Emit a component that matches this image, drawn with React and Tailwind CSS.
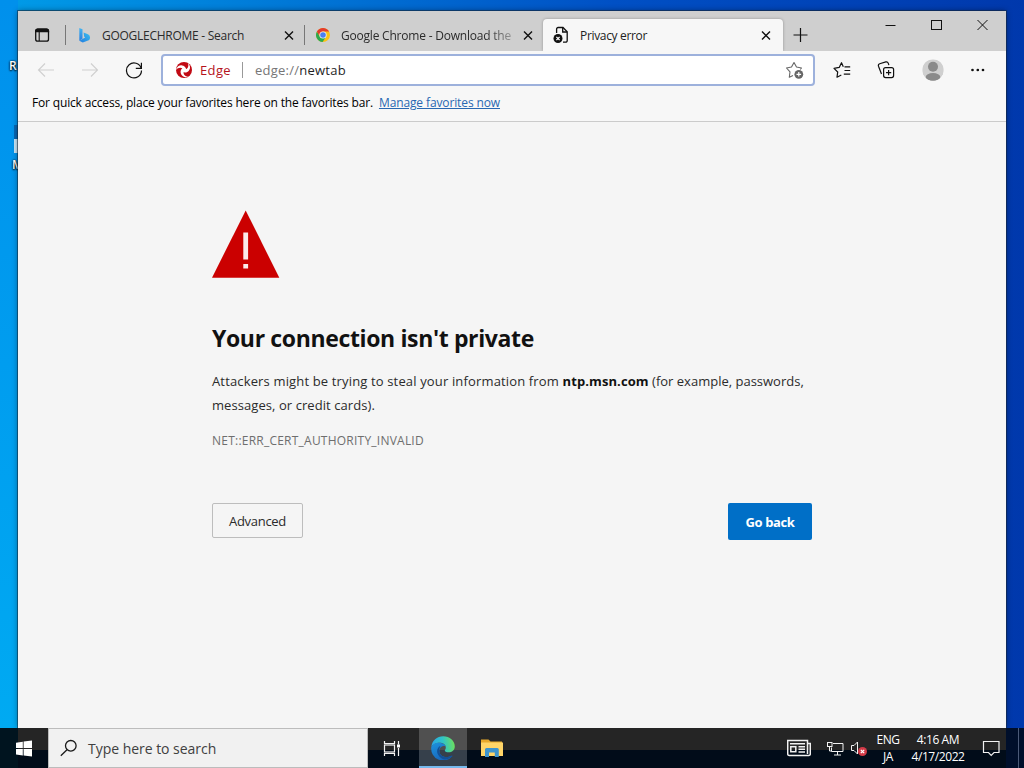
function TabActionsIcon() {
  return (
    <svg width="16" height="16" viewBox="0 0 16 16" fill="none" stroke="#111" strokeWidth="1.3">
      <rect x="1.7" y="2.2" width="12.8" height="12" rx="2" />
      <path d="M1.7 4a1.8 1.8 0 0 1 1.8-1.8h9.2A1.8 1.8 0 0 1 14.5 4v.7H1.7Z" fill="#111" />
      <path d="M5.2 5v9" strokeWidth="1.1" />
    </svg>
  )
}

function BingIcon() {
  return (
    <svg width="14" height="16" viewBox="0 0 14 16">
      <defs>
        <linearGradient id="bingStem" x1="0" y1="0" x2="0" y2="1">
          <stop offset="0" stopColor="#45b5f0" />
          <stop offset="1" stopColor="#2a7fe0" />
        </linearGradient>
        <linearGradient id="bingBowl" x1="0" y1="1" x2="1" y2="0">
          <stop offset="0" stopColor="#1f7be0" />
          <stop offset="1" stopColor="#3fc0ee" />
        </linearGradient>
      </defs>
      <path d="M1.3 1l3.2 1.2v9.6l-3.2 1.9Z" fill="url(#bingStem)" />
      <path d="M5.6 5.4l4.3 1.9a3.6 3.6 0 0 1 .9 6L4.8 15.4 1.3 13.7l5.9-3.2-1.1-1Z" fill="url(#bingBowl)" />
    </svg>
  )
}

function ChromeIcon() {
  return (
    <svg width="16" height="16" viewBox="0 0 16 16" className="mr-[2px] shrink-0">
      <circle cx="8" cy="8" r="7" fill="#fbc116" />
      <path d="M1.94 4.5A7 7 0 0 0 7.6 15L11 9.75 8 8 4.97 9.75Z" fill="#2da94f" />
      <path d="M1.94 4.5A7 7 0 0 1 14.06 4.5H8A3.5 3.5 0 0 0 4.97 9.75Z" fill="#e33b2e" />
      <circle cx="8" cy="8" r="3.6" fill="#f1f1f1" />
      <circle cx="8" cy="8" r="2.8" fill="#4a7ff0" />
    </svg>
  )
}

function BrokenPageIcon() {
  return (
    <svg width="16" height="18" viewBox="0 0 16 18" fill="none" stroke="#111" strokeWidth="1.3">
      <path d="M3.6 7V3A1.5 1.5 0 0 1 5.1 1.5H10l4.2 4.2v9a1.5 1.5 0 0 1-1.5 1.5H10" />
      <path d="M9.7 1.7V6H14" />
      <circle cx="5" cy="12.5" r="4.5" fill="#111" stroke="none" />
      <path d="m3.4 10.9 3.2 3.2m0-3.2-3.2 3.2" stroke="#fff" />
    </svg>
  )
}

function TabClose() {
  return (
    <svg width="10" height="10" viewBox="0 0 10 10" stroke="#111" strokeWidth="1.4" className="shrink-0">
      <path d="m1 1.500 8 8M9 1.500l-8 8" />
    </svg>
  )
}

function EdgePageIcon() {
  return (
    <svg width="18" height="18" viewBox="0 0 18 18">
      <circle cx="9" cy="9" r="8" fill="#c10a14" />
      <circle cx="9" cy="9" r="2.3" fill="#fff" />
      <g fill="#fff">
        <path d="M.9 9.300C1.700 5.800 4.200 4 7 4.400c2 .3 3.400 1.400 4 3L8 8.800C7.400 6.300 3.400 5.900.9 9.300Z" />
        <path d="M.9 9.300C1.700 5.800 4.200 4 7 4.400c2 .3 3.400 1.400 4 3L8 8.800C7.400 6.300 3.400 5.900.9 9.300Z" transform="rotate(120 9 9)" />
        <path d="M.9 9.300C1.700 5.800 4.200 4 7 4.400c2 .3 3.400 1.400 4 3L8 8.800C7.400 6.300 3.400 5.900.9 9.300Z" transform="rotate(240 9 9)" />
      </g>
    </svg>
  )
}

function EdgeLogo() {
  return (
    <svg width="24" height="24" viewBox="0 0 24 24">
      <defs>
        <linearGradient id="edgeTop" x1="0" y1="0.5" x2="1" y2="0.4">
          <stop offset="0" stopColor="#2aa5e8" />
          <stop offset="0.5" stopColor="#2fc4c8" />
          <stop offset="1" stopColor="#6ee05a" />
        </linearGradient>
        <linearGradient id="edgeBody" x1="0" y1="0" x2="0.6" y2="1">
          <stop offset="0" stopColor="#1d93de" />
          <stop offset="1" stopColor="#1763b8" />
        </linearGradient>
      </defs>
      <path d="M.3 11C1 4.5 6 .2 12.2.2c6.500 0 11.600 4.600 11.600 10 0 4-3 6.100-6 6.100-2.700 0-4-1-4-1.900 0-.7 1-1.200 1-3 0-2.400-2.400-4.600-6-4.600C4.800 6.800 1.500 8.800.3 11Z" fill="url(#edgeTop)" />
      <path d="M.3 11C1.500 8.200 4.800 6.600 8.500 6.800c3.500.1 5.600 2 6.200 3.600-4-1.800-6.800 1.600-6.300 5 .6 4.600 5.500 7.200 12.300 4.300.6-.2.8.2.5.6A11.900 11.900 0 0 1 .3 11Z" fill="url(#edgeBody)" />
      <path d="M9.600 9.700c-3.600 1.900-4.400 6-2.300 9.300 1.500 2.500 3.700 4.100 6.500 4.600 3-.3 5.700-1.600 7.400-3.300.3-.4.1-.8-.5-.6-6.800 2.900-11.700.3-12.300-4.300-.3-2 .1-4 1.200-5.700Z" fill="#145095" />
    </svg>
  )
}

function Tab({ icon, title, track }) {
  return (
    <div className="flex h-full w-[238px] items-center pl-[11px] pr-[10px]">
      <span className="flex w-4 shrink-0 justify-center">{icon}</span>
      <span className={`ml-[9px] w-[171px] overflow-hidden whitespace-nowrap pt-px text-xs text-[#2b2b2b] ${track}`}>{title}</span>
      <span className="ml-auto">
        <TabClose />
      </span>
    </div>
  )
}

function TitleBar() {
  return (
    <div className="flex h-[40px] shrink-0 bg-[#cfcfcf]">
      <div className="flex h-full w-[47px] items-center justify-center pt-[8px]">
        <TabActionsIcon />
      </div>
      <div className="flex h-full items-center pt-[8px]">
        <span className="h-5 w-px bg-[#777]" />
        <Tab icon={<BingIcon />} title="GOOGLECHROME - Search" track="tracking-[-0.27px]" />
        <span className="h-5 w-px bg-[#777]" />
        <div className="h-full [&_span:nth-child(2)]:[mask-image:linear-gradient(to_right,#000_145px,rgba(0,0,0,0.35)_170px)]">
          <Tab icon={<ChromeIcon />} title="Google Chrome - Download the" track="tracking-[-0.21px]" />
        </div>
      </div>
      <div className="mt-[8px] flex flex-1 rounded-t-[4px] bg-[#f7f7f7] pl-[10px] pr-[12px] shadow-[0_0_3px_rgba(0,0,0,0.3)] [clip-path:inset(-4px_-4px_0_-4px)]">
        <div className="flex w-full items-center">
          <BrokenPageIcon />
          <span className="ml-[11px] pt-px text-xs tracking-[-0.33px] text-[#222]">Privacy error</span>
          <span className="ml-auto">
            <TabClose />
          </span>
        </div>
      </div>
      <div className="flex w-[223px] justify-between">
        <svg width="16" height="16" viewBox="0 0 16 16" stroke="#111" strokeWidth="1.2" className="ml-[9px] mt-[16px]">
          <path d="M8.5 1v14M1.5 8h14" />
        </svg>
        <div className="mr-[18px] mt-[8px] flex h-3 items-center gap-[35px]">
          <svg width="11" height="12" viewBox="0 0 11 12" stroke="#111">
            <path d="M.5 6.500h10" />
          </svg>
          <svg width="11" height="12" viewBox="0 0 11 12" fill="none" stroke="#111">
            <rect x="0.5" y="1.5" width="10" height="9" />
          </svg>
          <svg width="11" height="12" viewBox="0 0 11 12" stroke="#111">
            <path d="m.5 1 10 10M10.500 1l-10 10" />
          </svg>
        </div>
      </div>
    </div>
  )
}

function Toolbar() {
  return (
    <div className="flex h-[38px] shrink-0 items-center bg-[#f7f7f7]">
      <div className="ml-[19px] flex w-[106px] items-center justify-between">
        <svg width="18" height="16" viewBox="0 0 18 16" fill="none" stroke="#cfcfcf" strokeWidth="1.1">
          <path d="M17 8H1.500M8 1.500 1.500 8 8 14.500" />
        </svg>
        <svg width="18" height="16" viewBox="0 0 18 16" fill="none" stroke="#cfcfcf" strokeWidth="1.1">
          <path d="M1 8h15.500M10 1.500 16.500 8 10 14.500" />
        </svg>
        <svg width="18" height="18" viewBox="0 0 18 18" fill="none" stroke="#111" strokeWidth="1.2">
          <path d="M16.200 7.300A7.500 7.500 0 1 0 16.500 9.500" />
          <path d="M16.400 1.700v5.600h-5.600" />
        </svg>
      </div>

      <div className="ml-[18px] flex h-[32px] w-[654px] items-center rounded-[4px] border-2 border-[#9db1dc] bg-white pl-[12px] pr-[9px]">
        <EdgePageIcon />
        <span className="ml-[7px] pt-px text-[13px] tracking-[0.35px] text-[#b5121b]">Edge</span>
        <span className="ml-[11px] h-4 w-px bg-[#999]" />
        <span className="ml-[12px] pt-px text-[13px] tracking-[0.25px] text-[#1f1f1f]">
          <span className="text-[#767676]">edge://</span>newtab
        </span>
        <svg width="19" height="18" viewBox="0 0 19 18" fill="none" stroke="#666" className="ml-auto">
          <path d="M8 14.500 4.300 16.200 5 10.800 1.500 7l5-1L9 1.500 11.500 6l5 1-1.200 1.500" strokeWidth="1.1" strokeLinejoin="round" />
          <circle cx="13.8" cy="13.3" r="4.4" fill="#666" stroke="none" />
          <path d="M13.800 11v4.600M11.500 13.300h4.600" stroke="#fff" strokeWidth="1.2" />
        </svg>
      </div>

      <div className="ml-[18px] flex w-[153px] items-center justify-between">
        <svg width="18" height="18" viewBox="0 0 18 18" fill="none" stroke="#111" strokeWidth="1.2">
          <path d="M11.500 5.800h5.700M11.500 9.500h5.700M10.800 13.200h6.400" />
          <path d="M8.300 14 4 16.200l.7-5.200L1 7.300l5.200-.9L8.500 1.700l1.800 4" strokeLinejoin="round" />
        </svg>
        <svg width="18" height="18" viewBox="0 0 18 18" fill="none" stroke="#111" strokeWidth="1.2">
          <rect x="6.6" y="6.6" width="10" height="10" rx="2" />
          <path d="M11.600 9v5.200M9 11.600h5.200" />
          <path d="M4.500 13 1.500 5.200a2 2 0 0 1 1.200-2.500L8.800.9a2 2 0 0 1 2.400 1.200l.7 2" />
        </svg>
        <svg width="22" height="22" viewBox="0 0 22 22">
          <defs>
            <clipPath id="avatar">
              <circle cx="11" cy="11" r="10.8" />
            </clipPath>
          </defs>
          <g clipPath="url(#avatar)">
            <circle cx="11" cy="11" r="10.8" fill="#cfcfcf" />
            <circle cx="11" cy="7.8" r="5" fill="#8a8a8a" />
            <ellipse cx="11" cy="18" rx="7.3" ry="4" fill="#8a8a8a" />
          </g>
        </svg>
        <svg width="16" height="6" viewBox="0 0 16 6" fill="#111">
          <circle cx="2.5" cy="3" r="1.35" />
          <circle cx="7.8" cy="3" r="1.35" />
          <circle cx="13" cy="3" r="1.35" />
        </svg>
      </div>
    </div>
  )
}

function ErrorPage() {
  return (
    <div className="min-h-0 flex-1 bg-[#f5f5f5] pl-[194px] pt-[88px]">
      <svg width="68" height="68" viewBox="0 0 68 68">
        <path d="M33.700.500 67.300 67.700H0Z" fill="#cb0000" />
        <path d="M31.300 22.500h4.800v27h-4.800ZM31.300 54h4.800v4.500h-4.800Z" fill="#fbeaea" />
      </svg>
      <div className="w-[600px]">
        <h1 className="mt-[44px] text-[23px] font-bold leading-8 tracking-[-0.36px] text-[#111]">
          Your connection isn't private
        </h1>
        <p className="mt-[15px] whitespace-nowrap text-[13px] leading-6 text-[#2b2b2b]">
          <span className="tracking-[0.15px]">Attackers might be trying to steal your information from </span>
          <span className="font-bold tracking-[0.1px] text-[#111]">ntp.msn.com</span> (for example, passwords,
          <br />
          <span className="tracking-[0.07px]">messages, or credit cards).</span>
        </p>
        <div className="mt-[14px] text-xs leading-5 tracking-[0.23px] text-[#6e6e6e]">NET::ERR_CERT_AUTHORITY_INVALID</div>
        <div className="mt-[52px] flex items-start justify-between">
          <button className="h-[35px] w-[91px] rounded-[2px] border border-[#bdbdbd] pt-[3px] text-[13px] tracking-[-0.3px] text-[#2b2b2b]">
            Advanced
          </button>
          <button className="h-[37px] w-[84px] rounded-[2px] bg-[#006fc7] pt-[2px] text-[13px] font-bold tracking-[-0.4px] text-white">
            Go back
          </button>
        </div>
      </div>
    </div>
  )
}

function Taskbar() {
  return (
    <div className="relative flex h-[40px] items-stretch bg-[linear-gradient(to_right,#00141f_18px,transparent_18px,transparent_1006px,#000f2b_1006px),linear-gradient(#252525_22px,#010c19_22px)] text-white">
      <div className="flex w-[48px] items-center justify-center">
        <svg width="17" height="17" viewBox="0 0 17 17" fill="#fff">
          <path d="M0 2.700 6.800 1.700v6.400H0ZM7.600 1.600 16 .4v7.700H7.600ZM0 8.900h6.800v6.500L0 14.400ZM7.600 8.900H16v7.700L7.600 15.500Z" />
        </svg>
      </div>
      <div className="flex w-[320px] items-center border border-[#bcbcbc] bg-[#f1f1f1] pl-[11px]">
        <svg width="18" height="18" viewBox="0 0 18 18" fill="none" stroke="#1a1a1a" strokeWidth="1.3">
          <circle cx="10.8" cy="6.8" r="5.3" />
          <path d="M7 10.800l-6.200 6" />
        </svg>
        <span className="ml-[10px] pt-[2px] text-sm tracking-[-0.03px] text-[#404040]">Type here to search</span>
      </div>
      <div className="flex w-[51px] items-center justify-center pr-[3px]">
        <svg width="18" height="17" viewBox="0 0 18 17" fill="none" stroke="#f2f2f2" strokeWidth="1.2">
          <path d="M1.500 1v2.500h10V1M1.500 16v-2.500h10V16" />
          <rect x="1.5" y="5" width="10" height="7" />
          <path d="M15.500 1v3.500M15.500 8v8" />
          <path d="M14 4.500h3v3h-3Z" fill="#fff" stroke="none" />
        </svg>
      </div>
      <div className="flex w-[48px] items-center justify-center border-b-2 border-[#76b9ed] bg-[linear-gradient(#505050_22px,#36404b_22px)] pt-px">
        <EdgeLogo />
      </div>
      <div className="flex w-[50px] items-center justify-center">
        <svg width="22" height="20" viewBox="0 0 22 20">
          <path d="M0 1.500h7.500l2 2H21V18H0Z" fill="#e8a92c" />
          <path d="M0 4.500h22V18H0Z" fill="#ffd568" />
          <path d="M4 11.500a1.500 1.500 0 0 1 1.500-1.500h10.800a1.500 1.500 0 0 1 1.500 1.500V19h-4v-4.500H8V19H4Z" fill="#3d94ce" />
        </svg>
      </div>

      <div className="ml-auto flex items-center">
        <svg width="24" height="18" viewBox="0 0 24 18" fill="none" stroke="#f2f2f2" strokeWidth="1.5">
          <path d="M20.500 4.500h2.800V15a1.500 1.500 0 0 1-1.500 1.500H2.200A1.500 1.500 0 0 1 .7 15V1.500h19.800V15" />
          <rect x="3.8" y="7.7" width="5" height="5" />
          <path d="M3 4.700h15M11.500 7.700H18M11.500 10.300H18M11.500 13H18" />
        </svg>
        <svg width="17" height="15" viewBox="0 0 17 15" fill="none" stroke="#f2f2f2" className="ml-[16px]">
          <path d="M6 2.500h10v8H4.500V6.500M10.500 10.500v3.500M7 14h7" />
          <rect x="0.5" y="1.5" width="4.5" height="4" />
          <path d="M2.500 5.500V10H4.500" />
        </svg>
        <div className="relative ml-[7px] h-[16px] w-[17px]">
          <svg width="17" height="16" viewBox="0 0 17 16" fill="none" stroke="#f2f2f2">
            <path d="M.5 5.500H3L6.500 2v12L3 10.500H.5Z" />
          </svg>
          <svg width="9" height="9" viewBox="0 0 9 9" className="absolute left-[7px] top-[7px]">
            <circle cx="4.5" cy="4.5" r="4.5" fill="#d23a47" />
            <path d="m2.800 2.800 3.400 3.400m0-3.400-3.400 3.400" stroke="#fff" strokeWidth="1.2" />
          </svg>
        </div>
        <div className="ml-[6px] w-[28px] text-center text-xs leading-[17px] tracking-[-0.4px]">
          <div>ENG</div>
          <div>JA</div>
        </div>
        <div className="ml-[7px] w-[58px] text-center text-xs leading-[17px] tracking-[-0.42px]">
          <div>4:16 AM</div>
          <div>4/17/2022</div>
        </div>
        <svg width="18" height="18" viewBox="0 0 18 18" fill="none" stroke="#f2f2f2" strokeWidth="1.2" className="ml-[15px]">
          <path d="M1.500 2.500H17v11h-5L9.200 16.300 6.500 13.500h-5Z" />
        </svg>
        <div className="ml-[18px] h-[40px] w-[6px] border-l border-[#4b5a78]" />
      </div>
    </div>
  )
}

export default function App() {
  return (
    <div className="flex h-[768px] w-[1024px] flex-col overflow-hidden bg-[linear-gradient(to_right,#009ce8_0%,#0078d7_28%,#0050c5_60%,#0038ac_100%)] font-['Open_Sans','Noto_Sans',sans-serif]">
      <div className="relative flex h-[728px] bg-[linear-gradient(to_bottom,#0090ec,#00aaf2)] bg-[length:18px_100%] bg-no-repeat pl-[18px] pr-[18px] pt-[11px]">
        {/* Desktop icons peeking out from behind the window */}
        <div className="absolute left-[9px] top-[58px] text-xs font-semibold leading-4 text-white [text-shadow:0_1px_2px_#000,0_0_2px_#000]">R</div>
        <div className="absolute left-[14px] top-[125px] h-[28px] w-[4px] bg-[linear-gradient(#0868b5_14px,#c9e7f8_14px)]" />
        <div className="absolute left-[12px] top-[157px] text-xs font-semibold leading-4 text-white [text-shadow:0_1px_2px_#000,0_0_2px_#000]">M</div>

        <div className="relative flex w-full flex-col shadow-[0_0_6px_rgba(0,0,0,0.45),0_0_0_1px_rgba(30,50,70,0.55)]">
          <TitleBar />
          <Toolbar />
          <div className="flex h-[33px] shrink-0 items-center border-b border-[#cbcbcb] bg-[#f7f7f7] pb-[4px] pl-[14px] text-xs text-black">
            <span className="tracking-[-0.165px]">For quick access, place your favorites here on the favorites bar.</span>
            <a className="ml-[6px] tracking-[-0.12px] text-[#2868b2] underline">Manage favorites now</a>
          </div>
          <ErrorPage />
        </div>
      </div>
      <Taskbar />
    </div>
  )
}
